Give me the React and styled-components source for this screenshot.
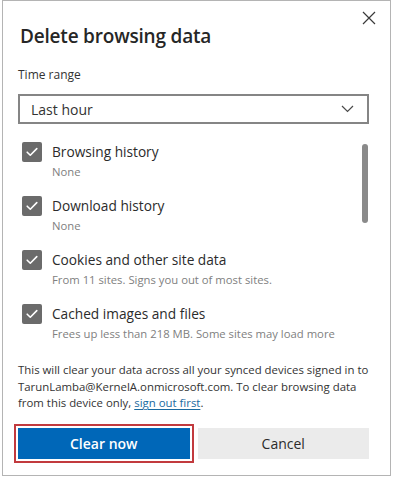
import React from 'react'
import styled, { createGlobalStyle } from 'styled-components'

const GlobalStyle = createGlobalStyle`
  html, body {
    margin: 0;
    padding: 0;
    background: #ffffff;
  }
  body {
    font-family: 'Open Sans', 'Noto Sans', sans-serif;
    color: #333333;
  }
`

const items = [
  { key: 'history', label: 'Browsing history', note: 'None' },
  { key: 'downloads', label: 'Download history', note: 'None' },
  { key: 'cookies', label: 'Cookies and other site data', note: 'From 11 sites. Signs you out of most sites.' },
  { key: 'cache', label: 'Cached images and files', note: 'Frees up less than 218 MB. Some sites may load more' },
]

const CheckIcon = () => (
  <svg width="12" height="10" viewBox="0 0 12 10" fill="none">
    <path d="M1.2 5.2 L4.3 8.2 L10.8 1.6" stroke="#ffffff" strokeWidth="1.6" strokeLinecap="round" strokeLinejoin="round" />
  </svg>
)

const CloseIcon = () => (
  <svg width="14" height="14" viewBox="0 0 14 14">
    <path d="M1 1 L13 13 M13 1 L1 13" stroke="#3a3a3a" strokeWidth="1.2" />
  </svg>
)

const ChevronIcon = () => (
  <svg width="13" height="8" viewBox="0 0 13 8" fill="none">
    <path d="M1 1 L6.5 6.5 L12 1" stroke="#4a4a4a" strokeWidth="1.2" />
  </svg>
)

const App = () => (
  <>
    <GlobalStyle />
    <Dialog>
      <Header>
        <Title>Delete browsing data</Title>
        <CloseButton aria-label="Close">
          <CloseIcon />
        </CloseButton>
      </Header>

      <FieldLabel>Time range</FieldLabel>
      <Select>
        <span>Last hour</span>
        <ChevronIcon />
      </Select>

      <ListArea>
        <List>
          {items.map(i => (
            <Row key={i.key}>
              <Checkbox>
                <CheckIcon />
              </Checkbox>
              <RowText>
                <RowLabel>{i.label}</RowLabel>
                <RowNote>{i.note}</RowNote>
              </RowText>
            </Row>
          ))}
        </List>
        <ScrollTrack>
          <ScrollThumb />
        </ScrollTrack>
      </ListArea>

      <Notice>
        This will clear your data across all your synced devices signed in to
        <br />
        TarunLamba@KernelA.onmicrosoft.com. To clear browsing data
        <br />
        from this device only, <NoticeLink href="#">sign out first</NoticeLink>.
      </Notice>

      <Buttons>
        <Button primary>Clear now</Button>
        <Button>Cancel</Button>
      </Buttons>
    </Dialog>
  </>
)

export default App

const Dialog = styled.div`
  box-sizing: border-box;
  width: 389px;
  height: 476px;
  margin-left: 2px;
  border: 1px solid #b4b4b4;
  background: #ffffff;
  padding: 9px 21px 0 15px;
  display: flex;
  flex-direction: column;
`

const Header = styled.div`
  display: flex;
  justify-content: space-between;
  align-items: flex-start;
`

const Title = styled.h2`
  margin: 13px 0 0 2px;
  font-size: 19px;
  line-height: 26px;
  font-weight: 600;
  letter-spacing: -0.2px;
  color: #262626;
`

const CloseButton = styled.button`
  display: flex;
  align-items: center;
  justify-content: center;
  width: 14px;
  height: 14px;
  padding: 0;
  margin: 1px -7px 0 0;
  border: none;
  background: none;
`

const FieldLabel = styled.div`
  margin-top: 18px;
  font-size: 12px;
  line-height: 16px;
  color: #333333;
`

const Select = styled.div`
  box-sizing: border-box;
  margin-top: 11px;
  height: 30px;
  border: 2px solid #858585;
  display: flex;
  align-items: center;
  justify-content: space-between;
  padding: 0 13px 0 11px;
  font-size: 14px;
  color: #333333;
`

const ListArea = styled.div`
  margin-top: 18px;
  height: 200px;
  display: flex;
`

const List = styled.div`
  flex: 1;
  display: flex;
  flex-direction: column;
  gap: 16px;
`

const Row = styled.div`
  display: flex;
  align-items: flex-start;
  padding-left: 4px;
`

const Checkbox = styled.div`
  box-sizing: border-box;
  width: 20px;
  height: 20px;
  border-radius: 2px;
  background: #6b6b6b;
  display: flex;
  align-items: center;
  justify-content: center;
  flex-shrink: 0;
`

const RowText = styled.div`
  margin-left: 10px;
  display: flex;
  flex-direction: column;
`

const RowLabel = styled.div`
  font-size: 13.7px;
  line-height: 20px;
  color: #2b2b2b;
`

const RowNote = styled.div`
  margin-top: 2px;
  font-size: 11.3px;
  line-height: 16px;
  color: #808080;
`

const ScrollTrack = styled.div`
  width: 6px;
  padding-top: 2px;
  margin-right: 1px;
`

const ScrollThumb = styled.div`
  width: 6px;
  height: 79px;
  border-radius: 3px;
  background: #8a8a8a;
`

const Notice = styled.p`
  margin: 20px 0 0 0;
  font-size: 11.4px;
  line-height: 16.5px;
  color: #333333;
  white-space: nowrap;
`

const NoticeLink = styled.a`
  color: #1a6aa0;
  text-decoration: underline;
  text-underline-offset: 2px;
`

const Buttons = styled.div`
  margin-top: 16px;
  display: grid;
  grid-template-columns: 1fr 1fr;
  gap: 8px;
`

const Button = styled.button`
  height: 31px;
  border: none;
  border-radius: 0;
  font-family: 'Open Sans', 'Noto Sans', sans-serif;
  font-size: 14px;
  font-weight: ${p => (p.primary ? 600 : 400)};
  color: ${p => (p.primary ? '#ffffff' : '#2b2b2b')};
  background: ${p => (p.primary ? '#0067b8' : '#ebebeb')};
  outline: ${p => (p.primary ? '2px solid #c23a3e' : 'none')};
  outline-offset: 2px;
`
